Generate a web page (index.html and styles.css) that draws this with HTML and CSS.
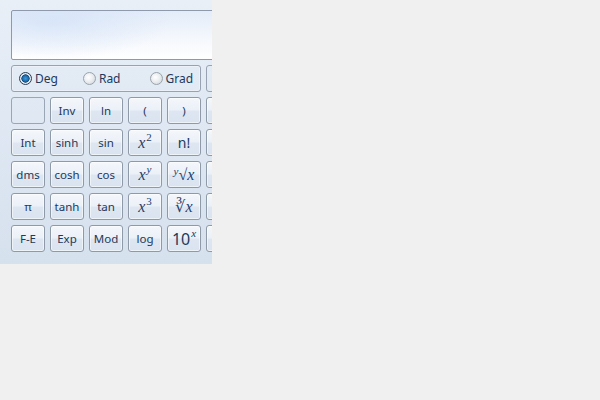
FILE: index.html
```html
<!DOCTYPE html>
<html>
<head>
<meta charset="utf-8">
<link rel="stylesheet" href="styles.css">
</head>
<body>
<div class="calc">
  <div class="inner">
    <div class="display"></div>
    <div class="modes">
      <div class="radios">
        <label class="radio on"><span class="dot"></span>Deg</label>
        <label class="radio r2"><span class="dot"></span>Rad</label>
        <label class="radio r3"><span class="dot"></span>Grad</label>
      </div>
      <div class="radios2"></div>
    </div>
    <div class="keys">
      <div class="key blank"></div>
      <div class="key">Inv</div>
      <div class="key">ln</div>
      <div class="key">(</div>
      <div class="key">)</div>
      <div class="key"></div>

      <div class="key">Int</div>
      <div class="key">sinh</div>
      <div class="key">sin</div>
      <div class="key m"><i>x</i><sup>2</sup></div>
      <div class="key big">n!</div>
      <div class="key"></div>

      <div class="key">dms</div>
      <div class="key">cosh</div>
      <div class="key">cos</div>
      <div class="key m"><i>x</i><sup><i>y</i></sup></div>
      <div class="key m"><sup class="ix"><i>y</i></sup>√<i>x</i></div>
      <div class="key"></div>

      <div class="key">π</div>
      <div class="key">tanh</div>
      <div class="key">tan</div>
      <div class="key m"><i>x</i><sup>3</sup></div>
      <div class="key m">∛<i>x</i></div>
      <div class="key"></div>

      <div class="key">F-E</div>
      <div class="key">Exp</div>
      <div class="key">Mod</div>
      <div class="key">log</div>
      <div class="key ten">10<sup><i>x</i></sup></div>
      <div class="key"></div>
    </div>
  </div>
</div>
</body>
</html>
```
FILE: styles.css
```css
html, body {
  margin: 0;
  padding: 0;
  background: #f0f0f0;
}
body {
  width: 600px;
  height: 400px;
  font-family: "Noto Sans", "Open Sans", sans-serif;
  color: #1e395b;
}
.calc {
  width: 212px;
  height: 264px;
  overflow: hidden;
  background: linear-gradient(180deg, #e9eff7 0%, #dfe8f3 45%, #d6e1ee 100%);
}
.inner {
  width: 260px;
  padding: 10px 0 0 11px;
  display: flex;
  flex-direction: column;
}
.display {
  height: 48px;
  border: 1px solid #8e9aab;
  border-radius: 2px;
  background:
    radial-gradient(ellipse 120px 40px at 40px 8px, rgba(214,228,248,0.9), rgba(255,255,255,0) 100%),
    linear-gradient(180deg, #e3ecf9 0%, #f4f7fc 55%, #ffffff 100%);
}
.modes {
  margin-top: 5px;
  display: flex;
  gap: 5px;
  height: 27px;
}
.radios {
  width: 190px;
  flex: none;
  border: 1px solid #97a3b3;
  border-radius: 3px;
  box-shadow: inset 0 0 0 1px rgba(255,255,255,0.35);
  display: flex;
  align-items: center;
  padding-left: 7px;
  box-sizing: border-box;
  font-size: 12px;
}
.radios2 {
  flex: 1;
  border: 1px solid #97a3b3;
  border-radius: 3px;
}
.radio {
  display: flex;
  align-items: center;
  gap: 3px;
  line-height: 14px;
}
.r2 { margin-left: 25px; }
.r3 { margin-left: 29px; }
.dot {
  width: 11px;
  height: 11px;
  border-radius: 50%;
  border: 1px solid #9aa3ad;
  background: radial-gradient(circle at 40% 40%, #ffffff 0%, #e9ecef 50%, #c9ced4 100%);
  position: relative;
}
.on .dot {
  border-color: #2b3d52;
  background: radial-gradient(circle at 50% 50%, #3c9be0 0%, #1d6aa8 38%, #0e3f6d 50%, #e8eef5 56%, #cfd6de 100%);
}
.keys {
  margin-top: 5px;
  display: grid;
  grid-template-columns: repeat(6, 34px);
  grid-auto-rows: 27px;
  gap: 5px;
}
.key {
  box-sizing: border-box;
  border: 1px solid #8f9aa9;
  border-radius: 3px;
  background: linear-gradient(180deg, #f4f7fb 0%, #ebf1f8 48%, #dde6f1 52%, #dae4f0 100%);
  box-shadow: inset 0 0 0 1px rgba(255,255,255,0.55);
  display: flex;
  align-items: center;
  justify-content: center;
  font-size: 11.5px;
  line-height: 1;
  padding-top: 1px;
}
.key.blank {
  background: transparent;
  box-shadow: none;
  border-color: #9aa6b5;
}
.key.m {
  font-family: "Liberation Serif", "DejaVu Serif", serif;
  font-size: 16px;
  color: #243d6b;
}
.key.m i { font-style: italic; }
.key sup {
  font-size: 11px;
  position: relative;
  top: -6px;
  vertical-align: baseline;
  margin-left: 1px;
}
.key sup.ix {
  margin: 0;
  top: -4px;
}
.key.big {
  font-size: 14px;
}
.key.ten {
  font-size: 16px;
  font-weight: 400;
}
.key.ten sup {
  font-family: "Liberation Serif", serif;
  font-size: 11px;
  top: -6px;
}
```
